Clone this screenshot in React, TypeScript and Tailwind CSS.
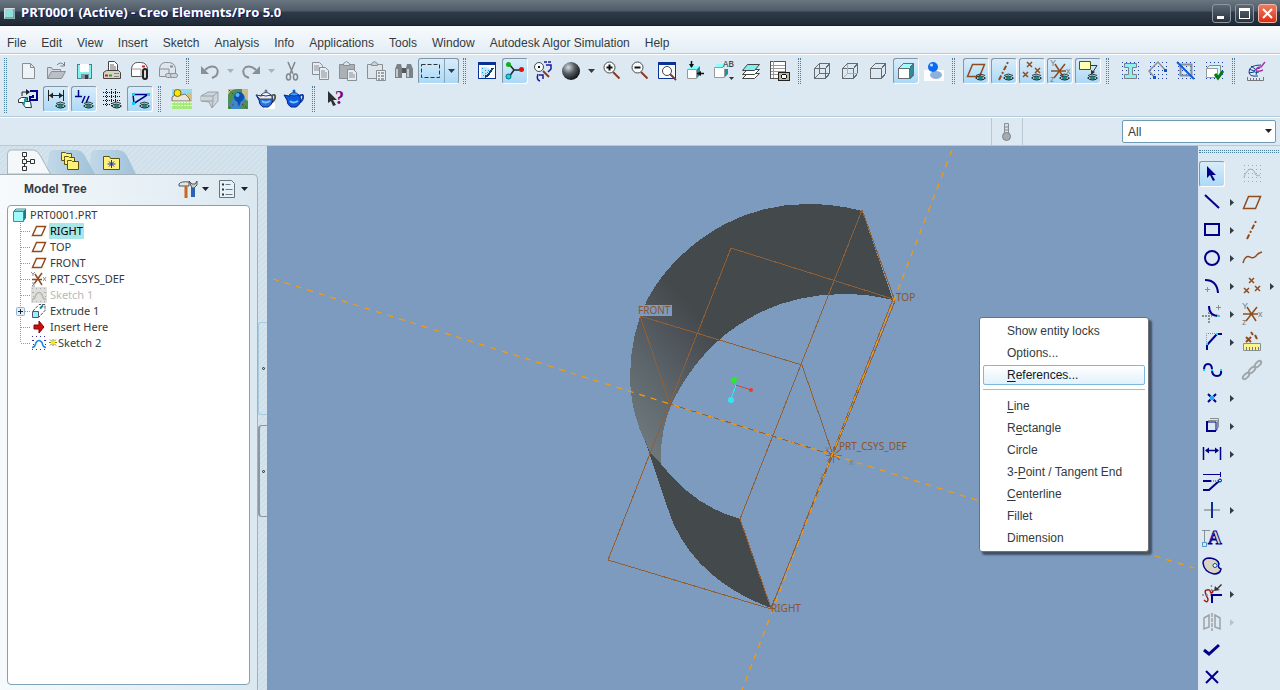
// src/App.tsx
import { Fragment, type ReactNode } from "react";

const NAVY = "#00008b";
const BROWN = "#8f4d1e";
const GRAY = "#8a8f94";

function Svg({ size = 24, children }: { size?: number; children: ReactNode }) {
  return (
    <svg
      width={size}
      height={size}
      viewBox={`0 0 ${size} ${size}`}
      fill="none"
      className="shrink-0"
      aria-hidden="true"
    >
      {children}
    </svg>
  );
}

// small "visibility" eye in the corner of display toggles
function Eye() {
  return (
    <g>
      <path d="M11 19q5-5 11 0q-5 5-11 0z" fill="#111a1c" />
      <path d="M12.5 19l2-1.5v3zM20.5 19l-2-1.5v3z" fill="#dfe6e6" />
      <circle cx="16.5" cy="19" r="2" fill="#0b8a80" />
      <path d="M12 16.5q4-3 9 0" stroke="#333" />
    </g>
  );
}

function Dots({ color = "#1a3ea8", step = 4 }: { color?: string; step?: number }) {
  const pts = [];
  for (let y = 3; y <= 20; y += step) {
    for (let x = 4; x <= 21; x += step) {
      pts.push(<rect key={`${x}-${y}`} x={x} y={y} width="1" height="1" fill={color} />);
    }
  }
  return <g shapeRendering="crispEdges">{pts}</g>;
}

function Magnifier({ sign }: { sign?: "plus" | "minus" }) {
  return (
    <g>
      <path d="M13 13l6.5 6.5" stroke="#8a3a22" strokeWidth="2" />
      <circle cx="9.5" cy="8.5" r="5.5" fill="#f8fbfd" stroke="#4a4a4a" />
      {sign && <path d="M6.5 8.5h6" stroke="#111" strokeWidth="2" />}
      {sign === "plus" && <path d="M9.5 5.5v6" stroke="#111" strokeWidth="2" />}
    </g>
  );
}

function Cube({ fill = "none", hidden = "" }: { fill?: string; hidden?: string }) {
  return (
    <g shapeRendering="crispEdges" stroke="#666b70">
      {fill !== "none" && (
        <>
          <path d="M4 9l5-4h11l-4 4z" fill="#9ff" stroke="none" />
          <path d="M16 9l4-4v11l-4 4z" fill="#2a8f96" stroke="none" />
        </>
      )}
      <path d="M4.5 9.5h11v10h-11z" fill={fill} />
      <path d="M4.5 9.5l5-5h10l-4 5M19.5 4.5v10l-4 5" />
      {hidden && <path d="M9.5 4.5v10h10M9.5 14.5l-5 5" stroke={hidden} />}
    </g>
  );
}

function Mail({ gray = false }: { gray?: boolean }) {
  return (
    <g>
      <path
        d="M3.5 17.5v-8q1-6 6-6h3q6 0 7 6v8z"
        fill={gray ? "#dde6ec" : "#fff"}
        stroke={gray ? GRAY : "#555"}
      />
      <path d="M4 10h9v8" stroke={gray ? GRAY : "#999"} />
      <path d="M14 7.5h3" stroke={gray ? GRAY : "#c22"} strokeWidth="2" />
      {gray ? (
        <g stroke={GRAY}>
          <rect x="9.5" y="14.5" width="7" height="4" rx="2" fill="#ccd5db" />
          <rect x="14.5" y="14.5" width="7" height="4" rx="2" fill="#ccd5db" />
        </g>
      ) : (
        <rect x="15" y="10" width="4" height="10" rx="2" fill="#ddd" stroke="#222" strokeWidth="2" />
      )}
    </g>
  );
}

function Teapot({ half = false }: { half?: boolean }) {
  return (
    <g>
      {half && <path d="M10 12h11v10h-11z" fill="#fff" />}
      <path d="M17 9q5-3 4 2q-1 4-5 5" stroke={half ? "#555" : "#0a3fae"} strokeWidth="2" />
      <path
        d="M2 8l5 1q5-3 11 0q2 8-4 11h-5q-4-2-4-7z"
        fill={half ? "#2b6fe0" : "#0a5be0"}
        stroke="#08257d"
      />
      {half && <path d="M2 8l5 1q5-3 11 0v3h-12z" fill="#e8edf2" stroke="#444" />}
      <path d="M7 8q5-5 10 0q-5 2-10 0z" fill={half ? "#fff" : "#39a2ff"} stroke="#223a80" />
      <circle cx="12" cy="4" r="1.5" fill={half ? "#777" : "#0a5be0"} />
      <path d="M8 14q3 3 8 0" stroke="#7cc4ff" strokeWidth="2" />
    </g>
  );
}

const plane = <path d="M3.5 18.5l5-12h12l-5 12z" stroke={BROWN} strokeWidth="1.5" />;
const axis = <path d="M7 21l9-18" stroke={BROWN} strokeWidth="2" strokeDasharray="5 2 2 2" />;
const points = (
  <path d="M9 4l5 5M14 4l-5 5M4 14l5 5M9 14l-5 5M15 12l5 5M20 12l-5 5" stroke={BROWN} strokeWidth="1.5" />
);
const csys = (
  <g>
    <path d="M3 12h15M6 19l11-14M7 5l9 14" stroke={BROWN} strokeWidth="1.5" />
    <g fill="#777c81" fontFamily="Liberation Sans, sans-serif" fontSize="9">
      <text x="2" y="7">Y</text>
      <text x="18" y="15">x</text>
      <text x="2" y="23">z</text>
    </g>
  </g>
);

const ICONS: Record<string, ReactNode> = {
  new: <path d="M6.5 4.5h8l4 4v11h-12zM14.5 4.5v4h4" fill="#eef3f7" stroke={GRAY} />,
  open: (
    <g>
      <path d="M3.5 19.5v-11h4l1 2h8v3" fill="#d3d9de" stroke={GRAY} />
      <path d="M3.5 19.5l4-7h14l-4 7z" fill="#b9c0c6" stroke={GRAY} />
      <path d="M13 6q4-4 7 0M20.5 3v4h-4" stroke="#777d83" />
    </g>
  ),
  save: (
    <g shapeRendering="crispEdges">
      <path d="M5.5 5.5h14v14h-14z" fill="#7ff3f3" stroke="#4a8088" />
      <path d="M8 5h9v8h-9z" fill="#fff" />
      <path d="M9 15h8v5h-8z" fill="#87929a" />
      <path d="M13 16h3v4h-3z" fill="#333c44" />
    </g>
  ),
  print: (
    <g>
      <path d="M8.5 12v-9.5h6l3 3v6.5z" fill="#fff" stroke="#444" />
      <path d="M10 6h4M10 8h6M10 10h6" stroke="#666" />
      <path d="M3.5 13.5l3-2h12l2 2v6h-17z" fill="#d8d3c4" stroke="#444" />
      <path d="M5 16.5h3" stroke="#c22" strokeWidth="2" />
      <path d="M9 16.5h3" stroke="#2a2" strokeWidth="2" />
      <path d="M14 14.5h5M14 17.5h5" stroke="#887" />
    </g>
  ),
  mail: <Mail />,
  mailLink: <Mail gray />,
  undo: (
    <g>
      <path d="M3 7v8h8z" fill={GRAY} />
      <path d="M7 11q5-5 10-3q5 3 1 9l-4 2" stroke={GRAY} strokeWidth="2" />
    </g>
  ),
  redo: (
    <g>
      <path d="M21 7v8h-8z" fill={GRAY} />
      <path d="M17 11q-5-5-10-3q-5 3-1 9l4 2" stroke={GRAY} strokeWidth="2" />
    </g>
  ),
  cut: (
    <g stroke="#7f868c" strokeWidth="1.5">
      <path d="M8 3l5 12M15 3l-5 12" />
      <ellipse cx="8.5" cy="18" rx="2" ry="3" />
      <ellipse cx="15.5" cy="18" rx="2" ry="3" />
    </g>
  ),
  copy: (
    <g fill="#e6edf2" stroke={GRAY}>
      <path d="M4.5 3.5h7l3 3v9h-10zM6 7h5M6 9h6M6 11h6" />
      <path d="M11.5 8.5h6l3 3v9h-9zM13 12h4M13 14h6M13 16h6M13 18h6" />
    </g>
  ),
  paste: (
    <g stroke={GRAY}>
      <path d="M3.5 5.5h15v14h-15z" fill="#a9b0b6" />
      <path d="M7.5 6.5v-2l3-2l3 2v2z" fill="#dfe5ea" />
      <path d="M11.5 10.5h6l3 3v8h-9zM13 14h4M13 16h6M13 18h6" fill="#e6edf2" />
    </g>
  ),
  pasteSpecial: (
    <g stroke={GRAY}>
      <path d="M3.5 5.5h15v14h-15z" fill="#dce5eb" />
      <path d="M7.5 6.5v-2l3-2l3 2v2z" fill="#c9d0d6" />
      <path d="M12.5 11.5h9v10h-9z" fill="#e8eff4" />
      <path d="M14 14h2M17 14h3M14 17h2M17 17h3M14 20h2M17 20h3" stroke="#555" />
    </g>
  ),
  find: (
    <g fill="#7a8187">
      <path d="M5 5h4l1 4v10h-7v-9zM19 5h-4l-1 4v10h7v-9z" />
      <path d="M10 9h4v5h-4z" fill="#555" />
      <path d="M5 10v8M16 10v8" stroke="#c3cad0" strokeWidth="2" />
    </g>
  ),
  selectBox: <path d="M2.5 5.5h18v13h-18z" stroke="#333" strokeDasharray="4 2" />,
  repaint: (
    <g shapeRendering="crispEdges">
      <path d="M3.5 3.5h17v16h-17z" fill="#fff" stroke="#0a3196" />
      <path d="M3 3h18v3h-18z" fill="#0a3196" />
      <path d="M6 8h5l7 3l-6 8h-6z" fill="#bfe8ff" />
      <path d="M10 18l3-2l5-7" stroke="#14406e" strokeWidth="2" />
      <path d="M7 9h1M10 11h1M7 13h1M13 11h1M10 14h1M8 16h1M12 13h1" stroke="#2196e8" />
    </g>
  ),
  spin: (
    <g>
      <path d="M6 5l5 6h7M11 11l-5 7" stroke="#1c2a30" strokeWidth="1.5" />
      <circle cx="5.5" cy="5.5" r="2.5" fill="#12b012" />
      <circle cx="18.5" cy="10.5" r="2.5" fill="#e01010" />
      <circle cx="5.5" cy="17.5" r="2.5" fill="#19d3d8" stroke="#0a6a7a" />
    </g>
  ),
  refit: (
    <g>
      <path d="M12 12l6 6" stroke="#8a3a22" strokeWidth="2" />
      <circle cx="8" cy="8" r="4.5" fill="#f8fbfd" stroke="#4a4a4a" />
      <path d="M7 8h2" stroke="#111" strokeWidth="2" />
      <path d="M13 3h3M17 3h3M15 6h5v4l-3 3M7 15q-2 6 2 7M8 16h4v4" stroke="#1a1aa0" strokeWidth="1.5" />
    </g>
  ),
  sphere: (
    <g>
      <radialGradient id="sphere" cx="0.35" cy="0.3" r="0.7">
        <stop offset="0" stopColor="#d6dde2" />
        <stop offset="0.5" stopColor="#596066" />
        <stop offset="1" stopColor="#15191c" />
      </radialGradient>
      <circle cx="12" cy="12" r="9" fill="url(#sphere)" />
    </g>
  ),
  zoomIn: <Magnifier sign="plus" />,
  zoomOut: <Magnifier sign="minus" />,
  zoomFit: (
    <g>
      <path d="M2.5 3.5h17v16h-17z" fill="#f4fafd" stroke="#0a3196" />
      <path d="M2 3h18v3h-18z" fill="#0a3196" />
      <path d="M14 15l6 6" stroke="#8a3a22" strokeWidth="2" />
      <circle cx="11" cy="12" r="4.5" fill="#fff" stroke="#444" />
    </g>
  ),
  orient: (
    <g>
      <path d="M3.5 10.5h9v9h-9z" fill="#fff" stroke="#999" />
      <path d="M3.5 10l3-3h9l-3 3z" fill="#8ff" />
      <path d="M13 10l3-3v9l-3 3z" fill="#1d9494" />
      <path d="M7.5 2v6M13 14.5h7" stroke="#111" strokeWidth="1.5" />
      <path d="M5 5h5l-2.5 4zM17 12v5l-4-2.5z" fill="#111" />
    </g>
  ),
  views: (
    <g>
      <path d="M2.5 8.5h10v10h-10z" fill="#fff" stroke="#999" />
      <path d="M3 8l2-3h9l-2 3z" fill="#8ff" />
      <path d="M13 9l3-3v9l-3 3z" fill="#1d9494" />
      <path d="M11 1h12v9h-12z" fill="#dce9f2" />
      <text x="11" y="8" fontSize="9" fontFamily="Liberation Mono, monospace" fill="#222">AB</text>
      <path d="M17 18h5l-2.5 3z" fill="#333" />
    </g>
  ),
  layers: (
    <g stroke="#444">
      <path d="M2.5 19.5l5-5h12l-5 5z" fill="#fff" />
      <path d="M2.5 15.5l5-5h12l-5 5z" fill="#fff" />
      <path d="M2.5 11.5l5-6h12l-5 6z" fill="#7ff0f0" />
    </g>
  ),
  viewMgr: (
    <g shapeRendering="crispEdges">
      <path d="M2.5 2.5h15v17h-15z" fill="#fff" stroke="#555" />
      <path d="M5 2v17M3 6h14M3 9h14M3 12h14M3 15h14" stroke="#999" />
      <path d="M10.5 13.5h11v8h-11z" fill="#b9b9a4" stroke="#222" />
      <circle cx="16" cy="17.5" r="2.5" fill="#fff" stroke="#111" />
    </g>
  ),
  wire: <Cube hidden="#666b70" />,
  hiddenLine: <Cube hidden="#aab0b5" />,
  noHidden: <Cube />,
  shaded: <Cube fill="#fff" />,
  realism: (
    <g>
      <path d="M2 11h20v11h-20z" fill="#fbfdff" />
      <ellipse cx="14" cy="16" rx="6" ry="4" fill="#8fb0d8" />
      <circle cx="11" cy="8" r="5" fill="#0c6cf0" />
      <circle cx="9.5" cy="6" r="1.5" fill="#bfe0ff" />
    </g>
  ),
  planeDisp: (
    <g>
      <path d="M3.5 17.5l5-12h12l-5 12z" stroke={BROWN} strokeWidth="1.5" />
      <Eye />
    </g>
  ),
  axisDisp: <g>{axis}<Eye /></g>,
  pointDisp: (
    <g>
      <path
        d="M7 3l5 5M12 3l-5 5M3 13l5 5M8 13l-5 5M15 9l5 5M20 9l-5 5"
        stroke={BROWN}
        strokeWidth="1.5"
      />
      <Eye />
    </g>
  ),
  csysDisp: <g>{csys}<Eye /></g>,
  noteDisp: (
    <g>
      <path d="M3.5 2.5h11v8h-11z" fill="#ffffb8" stroke="#555500" />
      <path d="M15 6.5h6l-5 8" stroke="#333" />
      <path d="M15 11v5l4-3z" fill="#333" />
      <Eye />
    </g>
  ),
  iBeam: (
    <g>
      <Dots />
      <path d="M6.5 4.5h12v4h-4v7h4v4h-12v-4h4v-7h-4z" fill="#8ff0f0" stroke="#7b8085" />
    </g>
  ),
  diamond: (
    <g>
      <Dots />
      <path d="M9 19l-6-7l9-9l8 9" stroke={GRAY} strokeWidth="1.5" />
      <path d="M7 17h3v3h-3zM18 10h3v3h-3z" fill="#0a55d0" />
    </g>
  ),
  noShade: (
    <g>
      <Dots />
      <path d="M6.5 5.5h11v11h-11z" stroke={GRAY} strokeWidth="2" />
      <path d="M3 3l17 17" stroke="#0a5fd8" strokeWidth="2" />
    </g>
  ),
  featureOk: (
    <g>
      <Dots />
      <path d="M4.5 9.5l3-3h11v9l-3 3" stroke="#888" fill="#cff" />
      <path d="M4.5 9.5h11v9h-11z" fill="#fff" stroke="#999" />
      <path d="M13 15l3 4l5-7" stroke="#087a10" strokeWidth="3" />
    </g>
  ),
  analysis: (
    <g>
      <path
        d="M14 17q-9 1-9-4q0-7 12-7M15 13q-5 1-5-1t6-3M5 10l5 2M7 7l4 3M5 14l5-1M12 16l1-4"
        stroke="#123b8a"
      />
      <path d="M12 12q0-4 5-4l4-5M12 12q3 1 7-1" stroke="#b030b0" strokeWidth="1.5" />
      <path d="M3.5 18v3.5h16v-3.5M6.5 19v2M9.5 19v2M12.5 19v2M15.5 19v2" stroke="#777" />
    </g>
  ),
  orientSketch: (
    <g>
      <path d="M14 4h7v9h-7v-3h3v-2" stroke={NAVY} strokeWidth="2" />
      <path d="M2.5 12.5l3-2h6v3l-3 2h-6z" fill="#fff" stroke="#333" />
      <path d="M6.5 16.5l3-2h5l1 6h-6z" fill="#e8ffff" stroke="#333" />
      <path d="M6 9v-4h5" stroke="#222" />
      <path d="M10 2l4 3l-4 3z" fill="#222" />
      <path d="M8 12l3-2v3l-3 2zM6 16l3-2v4z" fill="#18a0a0" />
    </g>
  ),
  dimDisp: (
    <g>
      <path d="M4.5 3v11M19.5 3v11M5 8.5h14" stroke="#222" />
      <path d="M5 8.5l4-3v6zM19 8.5l-4-3v6z" fill="#222" />
      <Eye />
    </g>
  ),
  constrDisp: (
    <g>
      <path d="M3 9.5h7M6.5 3v7M10 16l3-7M14 16l3-7" stroke={NAVY} strokeWidth="1.5" />
      <Eye />
    </g>
  ),
  gridDisp: (
    <g>
      <g shapeRendering="crispEdges" stroke={NAVY} strokeDasharray="1 1">
        <path d="M3 5.5h17M3 9.5h17M3 13.5h17M3 17.5h8" />
        <path d="M6.5 2v18M11.5 2v18M15.5 2v14" />
      </g>
      <Eye />
    </g>
  ),
  vertexDisp: (
    <g>
      <path d="M5 7.5h15l-14 9z" stroke={NAVY} strokeWidth="1.5" />
      <path d="M4 6h3v3h-3zM19 6h3v3h-3zM4 15h3v3h-3z" fill="#18cfe0" />
      <Eye />
    </g>
  ),
  scenery: (
    <g>
      <path d="M2 2h20v11h-20z" fill="#8fdcf4" />
      <path d="M16 9l3-4l3 2v7h-8z" fill="#d8bf7a" />
      <path d="M2 14v-4l5-3l4 1l4-1l4 4l1 3z" fill="#e9e5dc" stroke="#7b7468" />
      <circle cx="7.5" cy="6" r="3.5" fill="#ffe600" stroke="#7a6a00" />
      <path d="M2 14h20v8h-20z" fill="#a4eb7c" />
      <path d="M2 15.5h20M2 18.5h20" stroke="#e8ffd0" strokeDasharray="2 1" />
    </g>
  ),
  grayPart: (
    <g stroke="#9aa1a7" fill="#ccd5db">
      <path d="M3 9l7-4h10v9l-6 7l-3-6l-8-1z" />
      <path d="M3 9h12v5h-12M15 9l5-4M14 21l1-7" />
    </g>
  ),
  map: (
    <g>
      <path d="M2 2h20v20h-20z" fill="#4d8f55" />
      <path d="M2 8q3-6 9-6h-9zM16 2q-1 9 6 12v-12z" fill="#c9bd8c" />
      <path d="M2 18q5-3 6-10q7-4 10 0t-1 8l-3 6h-8z" fill="#3f88c8" />
      <circle cx="13" cy="10" r="5" fill="#0c4fb0" />
      <path d="M11 14h4l-2 6z" fill="#0c4fb0" />
      <circle cx="11.5" cy="8" r="2" fill="#58b4ff" />
      <path d="M3 3l5 5M16 17l5 4M3 21l6-5" stroke="#7a2f14" strokeDasharray="2 2" />
    </g>
  ),
  teapotHalf: <Teapot half />,
  teapot: <Teapot />,
  help: (
    <g>
      <path d="M4 4v12l3-2l2 5l3-1l-3-5h4z" fill="#2c2f33" />
      <text x="11" y="17" fontSize="18" fontWeight="bold" fontFamily="Liberation Serif, serif" fill="#800080">?</text>
    </g>
  ),
  pointer: <path d="M7 4v12l3-3l3 6l2-1l-3-5h4z" fill={NAVY} />,
  line: <path d="M5 5l14 13" stroke={NAVY} strokeWidth="2" />,
  rect: <path d="M5 6h14v11h-14z" stroke={NAVY} strokeWidth="2" />,
  circle: <circle cx="12" cy="12" r="7" stroke={NAVY} strokeWidth="2" />,
  arc: (
    <g>
      <path d="M5 6q12 0 13 13" stroke={NAVY} strokeWidth="2" />
      <path d="M5 15.5h5M7.5 13v5" stroke={GRAY} />
    </g>
  ),
  fillet: (
    <g>
      <path d="M9 4q0 10 10 10" stroke={NAVY} strokeWidth="2" />
      <path d="M16 5.5h5M18.5 3v5" stroke={GRAY} />
      <path d="M2 14h10M9 10v11" stroke={GRAY} strokeWidth="2" strokeDasharray="2 1" />
      <path d="M17 13h3v2h-3z" fill="#19d3e8" />
    </g>
  ),
  chamfer: (
    <g>
      <path d="M7 20v-5l10-11h5" stroke={NAVY} strokeWidth="2" />
      <path d="M6.5 14v-10.5h10" stroke={GRAY} strokeDasharray="1 1" />
      <path d="M6 13h2v2h-2zM16 3h2v2h-2z" fill="#19d3e8" />
    </g>
  ),
  spline: (
    <g>
      <path d="M4 12q0-6 4-6t4 6t5 6t4-6" stroke={NAVY} strokeWidth="2" />
      <path d="M3 11h2v2h-2zM11 11h2v2h-2zM20 11h2v2h-2z" fill="#19d3e8" />
    </g>
  ),
  point: (
    <g>
      <path d="M8 8l8 8M16 8l-8 8" stroke={NAVY} strokeWidth="2" />
      <path d="M10 10h4v4h-4z" fill="#2aa4ff" />
    </g>
  ),
  useEdge: (
    <g>
      <path d="M8.5 8v-1.5h9v9h-2M10 4.5h8.5v9" stroke={GRAY} />
      <path d="M7 8h9v9h-9z" fill="#dce9f2" stroke={NAVY} />
      <path d="M7 7v10h9" stroke={NAVY} strokeWidth="2" />
    </g>
  ),
  dimension: (
    <g>
      <path d="M3.5 5v13M20.5 5v13M6 8.5h12" stroke={NAVY} strokeWidth="1.5" />
      <path d="M5 8.5l4-3v6zM19 8.5l-4-3v6z" fill={NAVY} />
    </g>
  ),
  modify: (
    <g>
      <path d="M3 4.5h17M20.5 2v5" stroke={NAVY} />
      <path d="M3 11h8M3 20h6l10-9" stroke={NAVY} strokeWidth="2" />
      <path d="M11 11h7" stroke={GRAY} strokeDasharray="1 1" strokeWidth="2" />
      <circle cx="20" cy="10.5" r="1.5" fill="#8ff" stroke={NAVY} />
    </g>
  ),
  constrain: (
    <g>
      <path d="M4 12h16" stroke="#a8acae" strokeWidth="2" />
      <path d="M12 4v16" stroke="#0a3196" strokeWidth="2" />
    </g>
  ),
  text: (
    <g>
      <path d="M2 4.5h8M4.5 5v12" stroke={GRAY} />
      <path d="M2.5 16.5h4v4h-4z" stroke="#4a9ad0" />
      <text x="8" y="18" fontSize="19" fontWeight="bold" fontFamily="Liberation Serif, serif" fill="#ded8c6" stroke={NAVY}>A</text>
    </g>
  ),
  palette: (
    <g>
      <path d="M3 9q0-5 7-5q8 1 9 6q-2 3 2 5q-1 5-7 5q-10-2-11-11z" fill="#d8d3c4" stroke={NAVY} strokeWidth="1.5" />
      <circle cx="15" cy="11.5" r="2" fill="#dff" stroke="#0a4aa0" />
    </g>
  ),
  trim: (
    <g>
      <path d="M4 18q4 4 4-1q-5-9-1-9q3-1 4 3q2 0 2-3" stroke="#a01818" strokeWidth="1.5" />
      <path d="M12 12v9M12 13h10" stroke={NAVY} strokeWidth="2" />
      <path d="M14 9l1-5l2 2l4-4l1 1l-4 4l2 1z" fill="#333" />
      <path d="M2 13h9M11.5 3v8" stroke={GRAY} strokeDasharray="2 2" strokeWidth="1.5" />
    </g>
  ),
  mirror: (
    <g stroke="#9aa1a5" strokeWidth="1.5">
      <path d="M4 8l5-3v12l-5 2zM20 8l-5-3v12l5 2z" />
      <path d="M12 3v18" strokeDasharray="4 1" />
    </g>
  ),
  done: <path d="M4 12l5 4l10-9" stroke={NAVY} strokeWidth="3" />,
  quit: <path d="M6 5l12 12M18 5l-12 12" stroke={NAVY} strokeWidth="2" />,
  sketchOff: (
    <g>
      <Dots color="#a4abb0" />
      <path d="M4 15q3-8 7-8q3 0 5 6q2 2 4 0" stroke="#a4abb0" />
    </g>
  ),
  plane,
  axis,
  curve: <path d="M3 17q2-8 7-6q3 2 6-1q2-3 6-4" stroke={BROWN} strokeWidth="1.5" />,
  points,
  csys,
  annotate: (
    <g>
      <path d="M6 7l5 5M11 7l-5 5M11 2l2 3M15 5l2 4" stroke={BROWN} strokeWidth="2" />
      <path d="M3.5 13.5h17v7h-17z" fill="#fbf48a" stroke={GRAY} />
      <path d="M6.5 20v-3M9.5 20v-3M12.5 20v-3M15.5 20v-3M18.5 20v-3" stroke="#777" />
    </g>
  ),
  chain: (
    <g stroke="#a0a6aa" strokeWidth="2">
      <ellipse cx="6" cy="18" rx="4" ry="2" transform="rotate(-45 6 18)" />
      <ellipse cx="12" cy="12" rx="4" ry="2" transform="rotate(-45 12 12)" />
      <ellipse cx="18" cy="6" rx="4" ry="2" transform="rotate(-45 18 6)" />
    </g>
  ),
};

function Grip() {
  return (
    <div className="flex w-[14px] shrink-0 justify-start py-px pl-1">
      <div className="w-[3px] border-x border-dotted border-[#4b7f9e]" />
    </div>
  );
}

function ToolButton({ icon, pressed = false }: { icon: string; pressed?: boolean }) {
  return (
    <button
      type="button"
      aria-label={icon}
      aria-pressed={pressed}
      className="flex size-7 shrink-0 items-center justify-center"
    >
      <span
        className={
          pressed
            ? "flex size-[26px] items-center justify-center rounded-[3px] border border-[#8298a8] border-r-white border-b-white bg-linear-to-b from-[#d8ecfa] to-[#acd9f7]"
            : "flex size-[26px] items-center justify-center"
        }
      >
        <Svg>{ICONS[icon]}</Svg>
      </span>
    </button>
  );
}

function DownArrow({ className }: { className: string }) {
  return (
    <svg width="7" height="4" viewBox="0 0 7 4" className={className} aria-hidden="true">
      <path d="M0 0h7l-3.5 4z" fill="currentColor" />
    </svg>
  );
}

// "*" prefix = pressed toggle, "|" = grip, "v" / "V" = drop-down arrow (disabled / enabled)
const TOP_ROW =
  "new open save print mail mailLink | undo v redo v cut copy paste pasteSpecial find selectBox | repaint *spin refit sphere V zoomIn zoomOut zoomFit orient views layers viewMgr | wire hiddenLine noHidden *shaded realism | *planeDisp *axisDisp *pointDisp *csysDisp *noteDisp | iBeam diamond noShade featureOk | analysis".split(" ");
const SECOND_ROW =
  "orientSketch *dimDisp *constrDisp gridDisp *vertexDisp | scenery grayPart map teapotHalf teapot | help".split(" ");

function ToolRow({ items }: { items: string[] }) {
  return (
    <div className="flex h-7">
      {items.map((item, i) => {
        if (item === "|") return <Grip key={i} />;
        if (item === "v" || item === "V") {
          return (
            <button key={i} type="button" aria-label="More" className="flex w-[13px] items-center justify-center">
              <DownArrow className={item === "V" ? "text-[#333c44]" : "text-[#a9b2b8]"} />
            </button>
          );
        }
        if (item === "selectBox") {
          return (
            <div key={i} className="flex w-[41px] items-center">
              <button
                type="button"
                aria-label={item}
                className="flex h-[26px] w-full items-center rounded-[3px] border border-[#7d95a5] border-b-white bg-linear-to-b from-[#d8ecfa] to-[#acd9f7]"
              >
                <Svg>{ICONS.selectBox}</Svg>
                <span className="ml-px flex h-full flex-1 items-center justify-center border-l border-[#86a5b8]">
                  <DownArrow className="text-[#333c44]" />
                </span>
              </button>
            </div>
          );
        }
        const pressed = item.startsWith("*");
        return <ToolButton key={i} icon={pressed ? item.slice(1) : item} pressed={pressed} />;
      })}
    </div>
  );
}

const MENUS = [
  "File", "Edit", "View", "Insert", "Sketch", "Analysis", "Info", "Applications",
  "Tools", "Window", "Autodesk Algor Simulation", "Help",
];

type SideRow = { icon: string; more?: "on" | "off"; right?: string; rightMore?: boolean };

const SIDE_ROWS: SideRow[] = [
  { icon: "*pointer", right: "sketchOff" },
  { icon: "line", more: "on", right: "plane" },
  { icon: "rect", more: "on", right: "axis" },
  { icon: "circle", more: "on", right: "curve" },
  { icon: "arc", more: "on", right: "points", rightMore: true },
  { icon: "fillet", more: "on", right: "csys" },
  { icon: "chamfer", more: "on", right: "annotate" },
  { icon: "spline", right: "chain" },
  { icon: "point", more: "on" },
  { icon: "useEdge", more: "on" },
  { icon: "dimension", more: "on" },
  { icon: "modify" },
  { icon: "constrain", more: "on" },
  { icon: "text" },
  { icon: "palette" },
  { icon: "trim", more: "on" },
  { icon: "mirror", more: "off" },
  { icon: "done" },
  { icon: "quit" },
];

function RightArrow({ className }: { className: string }) {
  return (
    <svg width="4" height="7" viewBox="0 0 4 7" className={className} aria-hidden="true">
      <path d="M0 0v7l4-3.5z" fill="currentColor" />
    </svg>
  );
}

function SideToolbar() {
  return (
    <aside className="w-[82px] shrink-0 overflow-hidden bg-[#dce9f2] pt-1">
      <div className="mx-px mb-[7px] h-[3px] border-y border-dotted border-[#4b7f9e]" />
      {SIDE_ROWS.map((row) => (
        <div key={row.icon} className="flex h-7 items-center">
          <ToolButton icon={row.icon.replace("*", "")} pressed={row.icon.startsWith("*")} />
          <span className="flex w-3 justify-center">
            {row.more && (
              <RightArrow className={row.more === "on" ? "text-[#333c44]" : "text-[#b9c2c8]"} />
            )}
          </span>
          {row.right && <ToolButton icon={row.right} />}
          {row.rightMore && <RightArrow className="ml-1 text-[#333c44]" />}
        </div>
      ))}
    </aside>
  );
}

const treePlane = <path d="M1.5 12.5l4-9h9l-4 9z" stroke={BROWN} strokeWidth="1.5" />;
const treeCsys = (
  <g>
    <path d="M1 8.5h10M3 13l8-11M4 3l7 11" stroke={BROWN} strokeWidth="1.5" />
    <path d="M0 1l2 2l2-2M2 3v2M12 6l3 4M15 6l-3 4M1 12h3l-3 3h3" stroke={GRAY} />
  </g>
);
const treeSketch = (color: string, dot: string) => (
  <g>
    <path d="M1 1.5h14M1 14.5h14M1 5.5h2M13 5.5h2" stroke={dot} strokeDasharray="1 3" />
    <path d="M2.5 5v7M14.5 5v7" stroke={dot} strokeDasharray="1 3" />
    <path d="M1 12.5q3 0 4-5q3-4 6 0q1 5 4 5" stroke={color} strokeWidth="1.5" />
  </g>
);

const TREE: { label: string; icon: ReactNode; kind?: string }[] = [
  { label: "RIGHT", icon: treePlane, kind: "selected" },
  { label: "TOP", icon: treePlane },
  { label: "FRONT", icon: treePlane },
  { label: "PRT_CSYS_DEF", icon: treeCsys },
  {
    label: "Sketch 1",
    icon: (
      <g>
        <path d="M0 0h16v16h-16z" fill="#dedede" />
        {treeSketch("#b9bba8", "#aaa")}
      </g>
    ),
    kind: "disabled",
  },
  {
    label: "Extrude 1",
    icon: (
      <g>
        <path d="M1.5 8.5h6v6h-6z" fill="#8ff5f5" stroke="#557" />
        <path d="M2 8l6-6.5h6v6l-6 6.5" stroke="#555" strokeDasharray="3 1" />
        <path d="M9 5.5l3-3" stroke="#089" strokeWidth="2" />
      </g>
    ),
    kind: "expandable",
  },
  { label: "Insert Here", icon: <path d="M3 6h5v-4l5 6l-5 6v-4h-5z" fill="#d40808" stroke="#7a0808" /> },
  { label: "Sketch 2", icon: treeSketch("#1688e8", "#33339a"), kind: "new" },
];

function ModelTree() {
  return (
    <ul className="min-h-0 flex-1 overflow-hidden rounded-[4px] border border-[#7fa3b8] bg-white pt-px pl-1 font-['Noto_Sans','DejaVu_Sans',sans-serif] text-[11px] leading-4 text-[#333a40]">
      <li className="flex h-4 items-center gap-[2px]">
        <Svg size={16}>
          <path d="M11 4l3-2v9l-3 4z" fill="#177c86" />
          <path d="M1.5 4.5h10v10h-10z" fill="#a2fbfb" stroke="#3a8c96" />
          <path d="M2 4l2-2h10l-2 2z" fill="#d9ffff" stroke="#3a8c96" />
        </Svg>
        PRT0001.PRT
      </li>
      {TREE.map((node, i) => (
        <li key={node.label} className="flex h-4 items-center">
          <svg width="19" height="16" viewBox="0 0 19 16" className="shrink-0" fill="none" aria-hidden="true">
            <path
              d={i === TREE.length - 1 ? "M8.5 0v8" : "M8.5 0v16"}
              stroke="#9a9a9a"
              strokeDasharray="1 1"
            />
            <path d="M9 8.5h10" stroke="#9a9a9a" strokeDasharray="1 1" />
            {node.kind === "expandable" && (
              <g>
                <rect x="4.5" y="4.5" width="8" height="8" rx="1" fill="#e3eff8" stroke="#8fb3d0" />
                <path d="M6 8.5h5M8.5 6v5" stroke="#222" />
              </g>
            )}
          </svg>
          <Svg size={16}>{node.icon}</Svg>
          {node.kind === "new" && (
            <svg width="8" height="10" viewBox="0 0 8 10" className="ml-[2px]" aria-hidden="true">
              <path d="M4 1v7M0 4.5h8M1 1.5l6 6M7 1.5l-6 6" stroke="#8a8a10" />
              <path d="M2 3h4v3h-4z" fill="#ffee00" />
            </svg>
          )}
          <span
            className={
              node.kind === "selected"
                ? "ml-[2px] bg-[#a9e6e8] px-px text-black"
                : node.kind === "disabled"
                  ? "ml-[3px] text-[#b9b9b9]"
                  : node.kind === "new"
                    ? "ml-px"
                    : "ml-[3px]"
            }
          >
            {node.label}
          </span>
        </li>
      ))}
    </ul>
  );
}

function LeftPanel() {
  return (
    <aside className="flex w-[267px] shrink-0 bg-[repeating-linear-gradient(135deg,#cfe0ea_0px,#cfe0ea_2px,#d9e7ef_3px,#cfe0ea_4px)]">
      <div className="flex min-w-0 flex-1 flex-col pt-[2px]">
        <div className="h-[26px] shrink-0">
          <svg width="150" height="26" viewBox="0 0 150 26" fill="none" aria-hidden="true">
            <linearGradient id="tab" x1="0" y1="0" x2="1" y2="0">
              <stop offset="0" stopColor="#c3d9e8" />
              <stop offset="1" stopColor="#a0c2da" />
            </linearGradient>
            <path d="M88 26l3-20q0-4 5-4h22q6 0 9 6l9 18z" fill="url(#tab)" />
            <path d="M46 26l3-20q0-4 5-4h22q6 0 9 6l10 18z" fill="url(#tab)" />
            <path d="M7.5 26v-20q0-4 4-4h22q4 0 7 6l10 18z" fill="#f4f8fb" stroke="#a9b4bb" />
            <path
              d="M22.5 4.5h4v4h-4zM22.5 11.5h4v4h-4zM22.5 18.5h4v4h-4zM30.5 11.5h4v4h-4zM24.5 9v2M24.5 16v2M27 13.5h3"
              stroke="#333"
            />
            <g fill="#fff27a" stroke="#5c5410">
              <path d="M61.5 6.5v-2h4l1 1h5v7h-10z" />
              <path d="M64.5 10.5v-2h4l1 1h5v7h-10z" />
              <path d="M67.5 14.5v-2h4l1 1h6v8h-11z" />
              <path d="M103.5 21.5v-13h6l1 2h9v11z" />
            </g>
            <path d="M111.5 12v8M107.5 16h8M109 13.5l5 5M114 13.5l-5 5" stroke="#1a2ec0" />
          </svg>
        </div>
        <div className="flex min-h-0 flex-1 flex-col rounded-tr-[5px] border-t border-r border-[#a5b0b7] bg-linear-to-r from-[#f6fafc] to-[#dbe8f0] pr-[7px] pb-[5px] pl-[7px]">
          <div className="flex h-[30px] shrink-0 items-center pr-[2px] pb-[3px] pl-[17px]">
            <h2 className="flex-1 font-['Liberation_Sans',sans-serif] text-[12px] font-bold text-[#333a44]">
              Model Tree
            </h2>
            <button type="button" aria-label="Settings" className="flex items-center gap-1">
              <Svg size={20}>
                <path d="M1 5q2-3 10-2v4h-10z" fill="#dfe6ea" stroke="#555" />
                <path d="M8 7v12" stroke="#c4692a" strokeWidth="3" />
                <path d="M15 8v10" stroke="#2a62b8" strokeWidth="4" />
                <path d="M11 2l3 3h3l2-3v4l-3 3h-2z" fill="#c9d0d4" stroke="#555" />
              </Svg>
              <DownArrow className="text-[#1b2228]" />
            </button>
            <button type="button" aria-label="Show" className="ml-2 flex items-center gap-1">
              <Svg size={20}>
                <path d="M2.5 1.5h12l3 3v14h-15z" fill="#e6f1f8" stroke="#68737b" />
                <path d="M5 5.5h2M5 10.5h2M5 15.5h2" stroke="#333" strokeWidth="2" />
                <path d="M8.5 5.5h5M8.5 10.5h7M8.5 15.5h7" stroke="#6a7f8d" />
              </Svg>
              <DownArrow className="text-[#1b2228]" />
            </button>
          </div>
          <ModelTree />
        </div>
      </div>
      {/* collapse handles */}
      <div className="flex w-[9px] flex-col gap-[10px] pt-[176px]">
        <button
          type="button"
          aria-label="Collapse"
          className="flex h-[93px] items-center justify-center rounded-l-[3px] border border-r-0 border-[#a9cbe0]"
        >
          <span className="size-[3px] rounded-full border border-[#222]" />
        </button>
        <button
          type="button"
          aria-label="Expand"
          className="flex h-[92px] items-center justify-center rounded-l-[4px] border border-r-0 border-l-2 border-[#8d979d]"
        >
          <span className="size-[3px] rounded-full border border-[#222]" />
        </button>
      </div>
    </aside>
  );
}

function Model() {
  return (
    <svg
      viewBox="267 146 931 544"
      preserveAspectRatio="xMidYMid slice"
      className="block size-full"
      fill="none"
      role="img"
      aria-label="PRT0001"
    >
      <defs>
        <linearGradient id="surface" gradientUnits="userSpaceOnUse" x1="632" y1="425" x2="724" y2="345">
          <stop offset="0" stopColor="#6d7679" />
          <stop offset="0.4" stopColor="#5d666b" />
          <stop offset="0.7" stopColor="#50565c" />
          <stop offset="1" stopColor="#44494c" />
        </linearGradient>
      </defs>
      <g shapeRendering="crispEdges">
        <path
          d="M862 211C844 206 826 204 807 204C778 204 750 211 725 224C693 241 665 267 648 298C636 321 630 349 630 377C630 396 634 414 640 430L650 453L661 464C660 442 664 421 672 403C690 366 717 336 750 318C790 294 845 288 893 300Z"
          fill="url(#surface)"
        />
        <path
          d="M643 435L650 453L661 464C680 488 704 509 740 519L771 608C727 592 693 565 674 525C664 500 652 460 643 435Z"
          fill="#44494c"
        />
        <g stroke="#925f34">
          <path d="M640 316L802 365L833 455L670 404Z" />
          <path d="M731 248L893 299L771 609L608 560Z" />
          <path d="M862 210L740 519L771 608L895 301Z" />
        </g>
        <path d="M833 447v16M826 450l14 10M841 449l-14 12M826 455h16" stroke="#9a6434" />
        <path d="M736 385L734 380" stroke="#2bea2b" />
        <path d="M736 385L751 390" stroke="#ee3a2a" />
        <path d="M736 385L731 399" stroke="#30e8f4" />
      </g>
      {/* sketch reference lines */}
      <g stroke="#ff9a00" strokeWidth="1.2" strokeDasharray="6 6">
        <path d="M273 279L670 404L833 455L1197 569" />
        <path d="M952 150L894 300L832 455L742 690" />
      </g>
      <circle cx="734" cy="380" r="3" fill="#2bea2b" />
      <circle cx="751" cy="390" r="2" fill="#ee3a2a" />
      <circle cx="731" cy="400" r="3" fill="#30e8f4" />
      <rect x="638" y="305" width="34" height="11" fill="#7d9abf" />
      <g fontFamily="Noto Sans, DejaVu Sans, sans-serif" fontSize="10" fill="#8c552b">
        <text x="638" y="314">FRONT</text>
        <text x="896" y="301">TOP</text>
        <text x="839" y="450">PRT_CSYS_DEF</text>
        <text x="771" y="612">RIGHT</text>
      </g>
      <g fontFamily="Liberation Sans, sans-serif" fontSize="7" fill="#78777a">
        <text x="825" y="452">Y</text>
        <text x="849" y="465">X</text>
        <text x="820" y="479">Z</text>
      </g>
    </svg>
  );
}

// [text, index of the underlined letter]
const CONTEXT_ITEMS: [string, number][] = [
  ["Show entity locks", -1],
  ["Options...", -1],
  ["References...", 0],
  ["Line", 0],
  ["Rectangle", 1],
  ["Circle", -1],
  ["3-Point / Tangent End", 2],
  ["Centerline", 0],
  ["Fillet", -1],
  ["Dimension", -1],
];

function ContextMenu() {
  return (
    <div
      role="menu"
      className="absolute top-[171px] left-[712px] flex w-[170px] flex-col rounded-[3px] border border-[#6e7276] bg-white px-[3px] pt-[2px] pb-[2px] text-[12px] shadow-[3px_3px_2px_rgba(40,50,65,0.7)]"
    >
      {CONTEXT_ITEMS.map(([label, key]) => (
        <Fragment key={label}>
          <button
            type="button"
            role="menuitem"
            className={
              label === "References..."
                ? "my-px h-5 rounded-[2px] border border-[#7db9da] bg-linear-to-b from-white to-[#e2f1fb] pl-[23px] text-left leading-[18px] text-[#0e1a24]"
                : "h-[22px] pl-6 text-left leading-[22px] text-[#333a40]"
            }
          >
            {key < 0 ? (
              label
            ) : (
              <>
                {label.slice(0, key)}
                <span className="underline underline-offset-2">{label[key]}</span>
                {label.slice(key + 1)}
              </>
            )}
          </button>
          {label === "References..." && <hr className="mt-[3px] mb-[5px] border-[#b5b5ba]" />}
        </Fragment>
      ))}
    </div>
  );
}

export default function App() {
  return (
    <div className="flex h-screen flex-col overflow-hidden bg-[#dce9f2] font-['Liberation_Sans',Arial,sans-serif] text-[12px] text-[#333a40]">
      {/* title bar */}
      <header className="flex h-[26px] shrink-0 items-center gap-[5px] bg-[linear-gradient(#6a7681_0,#4e5a67_11px,#2f3b4a_12px,#202a37_25px,#10151c_26px)] pr-[3px] pl-[3px]">
        <Svg size={13}>
          <path d="M1.5 1.5h10v10h-10z" fill="#8fdedd" stroke="#d8dedf" />
          <path d="M11 2v9h-9" stroke="#337d80" />
        </Svg>
        <h1 className="flex-1 truncate font-['Open_Sans','Noto_Sans',sans-serif] text-[13px] font-bold text-white [text-shadow:1px_1px_0_#101a70]">
          PRT0001 (Active) - Creo Elements/Pro 5.0
        </h1>
        <div className="flex gap-1">
          <button
            type="button"
            aria-label="Minimize"
            className="flex size-[19px] items-end rounded-[3px] border border-[#8d97a1] bg-linear-to-b from-[#5d6975] to-[#29333f] pb-[3px] pl-1"
          >
            <span className="h-[3px] w-[7px] bg-white" />
          </button>
          <button
            type="button"
            aria-label="Maximize"
            className="flex size-[19px] items-center justify-center rounded-[3px] border border-[#8d97a1] bg-linear-to-b from-[#5d6975] to-[#29333f]"
          >
            <span className="size-[11px] border border-t-[3px] border-white" />
          </button>
          <button
            type="button"
            aria-label="Close"
            className="flex size-[19px] items-center justify-center rounded-[3px] border border-[#f3b7a8] bg-linear-to-b from-[#ea7a60] to-[#dc2a10]"
          >
            <svg width="11" height="11" viewBox="0 0 11 11" aria-hidden="true">
              <path d="M1 1l9 9M10 1l-9 9" stroke="#fff" strokeWidth="2" />
            </svg>
          </button>
        </div>
      </header>

      {/* menu bar */}
      <nav className="flex h-7 shrink-0 items-center gap-[15px] border-b border-[#b4cbda] bg-linear-to-b from-[#f8fbfd] to-[#e4edf5] pt-[7px] pl-[7px]">
        {MENUS.map((name) => (
          <button key={name} type="button" className="whitespace-nowrap">
            {name}
          </button>
        ))}
      </nav>

      {/* tool bars */}
      <div className="flex h-[63px] shrink-0 overflow-hidden border-t border-b border-t-white border-b-[#b4cbda] py-[2px]">
        <Grip />
        <div>
          <ToolRow items={TOP_ROW} />
          <ToolRow items={SECOND_ROW} />
        </div>
      </div>

      {/* dashboard strip */}
      <div className="flex h-[29px] shrink-0 items-center border-t border-b border-t-white border-b-[#b4cbda] pr-1">
        <div className="flex-1" />
        <div className="flex h-full w-8 items-center justify-center border-x border-[#b9c9d4]">
          <Svg size={20}>
            <path d="M7.5 1.5h4v10h-4zM8 5h3M8 8h3" fill="#d9dde0" stroke="#888e93" />
            <circle cx="9.5" cy="14.5" r="4" fill="#a5abb0" stroke="#7d8388" />
          </Svg>
        </div>
        <div className="relative ml-[99px] w-[154px]">
          <select
            aria-label="Selection filter"
            defaultValue="All"
            className="h-[23px] w-full appearance-none rounded-[2px] border border-[#6f9ab2] bg-white pl-[5px] text-[12px]"
          >
            <option>All</option>
          </select>
          <DownArrow className="pointer-events-none absolute top-[9px] right-1 text-[#222]" />
        </div>
      </div>

      <div className="flex min-h-0 flex-1">
        <LeftPanel />
        <main className="relative min-w-0 flex-1 overflow-hidden bg-[#7d9abf]">
          <Model />
          <ContextMenu />
        </main>
        <SideToolbar />
      </div>
    </div>
  );
}
